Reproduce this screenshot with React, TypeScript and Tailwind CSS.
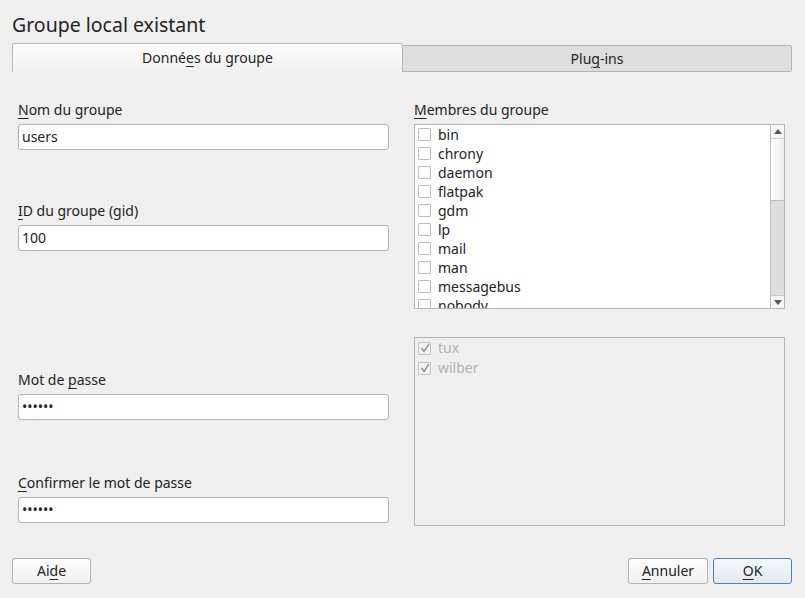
const users = ['bin', 'chrony', 'daemon', 'flatpak', 'gdm', 'lp', 'mail', 'man', 'messagebus', 'nobody'];
const members = ['tux', 'wilber'];

function Mn({ children }: { children: string }) {
  return <span className="underline decoration-1 underline-offset-[3px]">{children}</span>;
}

function Field({ label, value, className }: { label: React.ReactNode; value: string; className?: string }) {
  return (
    <div className={className}>
      <div className="h-[18px] leading-[18px]">{label}</div>
      <div className="mt-[5px] flex h-[26px] items-center rounded-[3px] border border-[#b4b4b4] bg-white pl-[3px] leading-[18px]">
        {value}
      </div>
    </div>
  );
}

function Check({ on, disabled }: { on?: boolean; disabled?: boolean }) {
  return (
    <div
      className={`flex h-[13px] w-[13px] shrink-0 items-center justify-center rounded-[1px] border ${
        disabled ? 'border-[#c2c2c2] bg-[#f2f2f2]' : 'border-[#bdbdbd] bg-white'
      }`}
    >
      {on && (
        <svg width="10" height="10" viewBox="0 0 10 10" fill="none">
          <path d="M1.5 5 L4 8.5 L8.8 1.2" stroke="#8e8e8e" strokeWidth="1.4" />
        </svg>
      )}
    </div>
  );
}

function Arrow({ up }: { up?: boolean }) {
  return (
    <svg width="8" height="5" viewBox="0 0 8 5">
      <path d={up ? 'M0 5 L4 0 L8 5 Z' : 'M0 0 L8 0 L4 5 Z'} fill="#5a5a5a" />
    </svg>
  );
}

export default function App() {
  return (
    <div
      className="flex h-[598px] w-[805px] flex-col overflow-hidden bg-[#efefef] text-[14px] text-[#232323]"
      style={{ fontFamily: '"Noto Sans", sans-serif' }}
    >
      <h1 className="mt-[13px] px-[12px] text-[19.5px] leading-[24px]">Groupe local existant</h1>

      {/* Tabs */}
      <div className="mt-[6px] flex h-[29px] items-end px-[12px]">
        <div className="flex h-[29px] w-[391px] items-center justify-center rounded-t-[3px] border-x border-t border-[#b8b8b8] bg-gradient-to-b from-[#fdfdfd] to-[#f0f0f0] leading-[18px]">
          Donné<Mn>e</Mn>s du groupe
        </div>
        <div className="-ml-px flex h-[27px] w-[390px] items-center justify-center rounded-[2px] border border-[#b4b4b4] bg-[#dedede] leading-[18px]">
          Plu<Mn>g</Mn>-ins
        </div>
      </div>

      {/* Content */}
      <div className="flex h-[486px] gap-[25px] px-[18px] pt-[29px]">
        <div className="w-[371px]">
          <Field label={<><Mn>N</Mn>om du groupe</>} value="users" />
          <Field className="mt-[52px]" label={<><Mn>I</Mn>D du groupe (gid)</>} value="100" />
          <Field className="mt-[120px]" label={<>Mot de <Mn>p</Mn>asse</>} value="••••••" />
          <Field className="mt-[54px]" label={<><Mn>C</Mn>onfirmer le mot de passe</>} value="••••••" />
        </div>

        <div className="w-[371px]">
          <div className="h-[18px] leading-[18px]">
            <Mn>M</Mn>embres du groupe
          </div>
          <div className="mt-[5px] flex h-[185px] border border-[#b4b4b4] bg-white">
            <div className="flex-1 overflow-hidden">
              {users.map((u) => (
                <div key={u} className="flex h-[19px] shrink-0 items-center gap-[7px] pl-[3px] leading-[18px]">
                  <Check />
                  <span>{u}</span>
                </div>
              ))}
            </div>
            <div className="flex w-[14px] flex-col border-l border-[#bdbdbd]">
              <div className="flex h-[14px] items-center justify-center border-b border-[#d0d0d0] bg-[#f6f6f6]">
                <Arrow up />
              </div>
              <div className="h-[62px] border-b border-[#bcbcbc] bg-gradient-to-r from-white to-[#ededed]" />
              <div className="flex-1 bg-[#dddddd]" />
              <div className="flex h-[13px] items-center justify-center border-t border-[#c8c8c8] bg-[#f6f6f6]">
                <Arrow />
              </div>
            </div>
          </div>

          <div className="mt-[28px] h-[189px] border border-[#b4b4b4] bg-[#efefef] text-[#b2b2b2]">
            {members.map((m) => (
              <div key={m} className="flex h-[20px] items-center gap-[7px] pl-[3px] leading-[18px]">
                <Check on disabled />
                <span>{m}</span>
              </div>
            ))}
          </div>
        </div>
      </div>

      {/* Buttons */}
      <div className="flex items-center justify-between px-[12px]">
        <button className="flex h-[26px] w-[79px] items-center justify-center rounded-[3px] border border-[#b0b0b0] bg-gradient-to-b from-[#fcfcfc] to-[#f0f0f0] leading-[18px]">
          Ai<Mn>d</Mn>e
        </button>
        <div className="flex gap-[5px] pr-[1px]">
          <button className="flex h-[26px] w-[80px] items-center justify-center rounded-[3px] border border-[#b0b0b0] bg-gradient-to-b from-[#fcfcfc] to-[#f0f0f0] leading-[18px]">
            <Mn>A</Mn>nnuler
          </button>
          <button className="flex h-[26px] w-[79px] items-center justify-center rounded-[3px] border border-[#4a84b6] bg-gradient-to-b from-[#f6f9fb] to-[#e2e8ee] leading-[18px]">
            <Mn>O</Mn>K
          </button>
        </div>
      </div>
    </div>
  );
}
